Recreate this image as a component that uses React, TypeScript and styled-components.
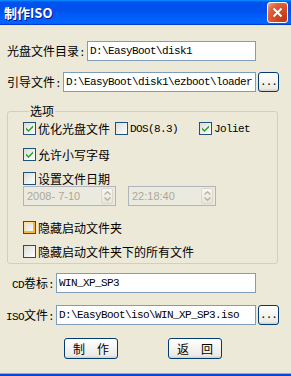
import styled, { createGlobalStyle, css } from "styled-components";

const CJK = `"Noto Sans CJK SC", "Liberation Sans", sans-serif`;
const MONO = `"Liberation Mono", "Noto Sans CJK SC", monospace`;

const GlobalStyle = createGlobalStyle`
  html, body {
    margin: 0;
    padding: 0;
    background: #ece9d8;
  }
  body {
    font-family: ${CJK};
    font-size: 12px;
    color: #000;
  }
`;

const Window = styled.div`
  width: 291px;
  height: 376px;
  display: flex;
  flex-direction: column;
  background: #ece9d8;
  overflow: hidden;
`;

const TitleBar = styled.div`
  height: 25px;
  flex: none;
  display: flex;
  align-items: center;
  justify-content: space-between;
  padding: 0 3px 0 4px;
  box-sizing: border-box;
  background: linear-gradient(
    180deg,
    #0997ff,
    #0053ee 8%,
    #0050ee 40%,
    #0066ff 88%,
    #0066ff 93%,
    #005bff 95%,
    #003dd7 96%,
    #003dd7
  );
`;

const Title = styled.span`
  color: #fff;
  font: bold 13px ${CJK};
  line-height: 1;
  text-shadow: 1px 1px #0f1089;
`;

const CloseButton = styled.button`
  width: 21px;
  height: 21px;
  padding: 0;
  display: flex;
  align-items: center;
  justify-content: center;
  border: 1px solid #fff;
  border-radius: 3px;
  background: radial-gradient(
    circle at 85% 85%,
    #c03a12 0%,
    #d8502a 50%,
    #e26440 72%,
    #f09a78 92%,
    #fcd8c8 100%
  );
`;

const Body = styled.div`
  flex: 1;
  padding-top: 16px;
`;

const FrameBottom = styled.div`
  height: 3px;
  flex: none;
  background: linear-gradient(180deg, #8fa8e8 0 1px, #0b47d6 1px);
`;

const Row = styled.div<{ $gap?: number }>`
  display: flex;
  align-items: center;
  height: 20px;
  margin-top: ${({ $gap }) => $gap ?? 0}px;
`;

const Label = styled.label<{ $width: number }>`
  width: ${({ $width }) => $width}px;
  flex: none;
  box-sizing: border-box;
  padding-right: 2px;
  text-align: right;
  white-space: nowrap;
  line-height: 20px;
`;

const Latin = styled.span`
  font: 11px ${MONO};
  letter-spacing: -0.6px;
`;

const TextBox = styled.input<{ $width: number }>`
  width: ${({ $width }) => $width}px;
  height: 20px;
  flex: none;
  box-sizing: border-box;
  margin: 0;
  padding: 0 0 0 2px;
  border: 1px solid #7f9db9;
  border-radius: 0;
  background: #fff;
  color: #000;
  font: 11px ${MONO};
  letter-spacing: -0.6px;
  outline: none;
`;

const XpButton = styled.button`
  padding: 0;
  margin: 0;
  border: 1px solid #003c74;
  border-radius: 3px;
  background: linear-gradient(180deg, #fff, #ecebe6 86%, #d6d0c5);
  color: #000;
  box-sizing: border-box;
`;

const BrowseButton = styled(XpButton)`
  width: 21px;
  height: 20px;
  margin-left: 2px;
  font: 11px ${MONO};
  letter-spacing: -1px;
  line-height: 16px;
`;

const Group = styled.fieldset`
  margin: 13px 13px 0 7px;
  padding: 5px 0 5px 15px;
  border: 1px solid #d0d0bf;
  border-radius: 3px;
  min-width: 0;
`;

const GroupTitle = styled.legend`
  margin-left: 6px;
  padding: 0 1px;
  font-size: 12px;
  line-height: 12px;
`;

const CheckRow = styled.div<{ $gap?: number }>`
  display: flex;
  align-items: center;
  height: 13px;
  margin-top: ${({ $gap }) => $gap ?? 0}px;
`;

const CheckItem = styled.label<{ $width?: number }>`
  display: flex;
  align-items: center;
  gap: 2px;
  flex: none;
  width: ${({ $width }) => ($width ? `${$width}px` : "auto")};
  white-space: nowrap;
  line-height: 13px;
`;

const Box = styled.span<{ $hot?: boolean }>`
  width: 13px;
  height: 13px;
  flex: none;
  box-sizing: border-box;
  display: inline-flex;
  align-items: center;
  justify-content: center;
  border: 1px solid #1c5180;
  background: linear-gradient(135deg, #dcdcd7, #fff);
  ${({ $hot }) =>
    $hot &&
    css`
      box-shadow: inset -2px -2px #f8b636, inset 2px 2px #fedf9c;
    `}
`;

const PickerRow = styled.div`
  display: flex;
  gap: 12px;
  margin-top: 1px;
`;

const Picker = styled.div<{ $width: number }>`
  width: ${({ $width }) => $width}px;
  height: 20px;
  box-sizing: border-box;
  display: flex;
  align-items: center;
  justify-content: space-between;
  padding: 0 2px 0 3px;
  border: 1px solid #b0b4bc;
  background: #ebeadf;
  color: #aca899;
  font: 11px "Liberation Sans", sans-serif;
  white-space: pre;
`;

const Spinner = styled.div`
  width: 12px;
  height: 16px;
  box-sizing: border-box;
  display: flex;
  flex-direction: column;
  align-items: center;
  justify-content: space-evenly;
  border: 1px solid #dcd9cc;
  border-radius: 2px;
  background: linear-gradient(180deg, #f8f7f3, #e6e4da);
`;

const ActionRow = styled.div`
  display: flex;
  gap: 50px;
  padding-left: 64px;
  margin-top: 13px;
`;

const ActionButton = styled(XpButton)`
  width: 54px;
  height: 21px;
  font: 12px ${CJK};
  line-height: 19px;
`;

const Check = () => (
  <svg width="7" height="7" viewBox="0 0 7 7">
    <polygon points="0,2.5 2.5,5 7,0.5 7,2.5 2.5,7 0,4.5" fill="#21a121" />
  </svg>
);

const CheckBox = ({
  checked,
  hot,
  width,
  children,
}: {
  checked?: boolean;
  hot?: boolean;
  width?: number;
  children: React.ReactNode;
}) => (
  <CheckItem $width={width}>
    <Box $hot={hot}>{checked && <Check />}</Box>
    {children}
  </CheckItem>
);

const Arrow = ({ up }: { up?: boolean }) => (
  <svg width="7" height="4" viewBox="0 0 7 4">
    <polyline
      points={up ? "0.5,3.5 3.5,0.8 6.5,3.5" : "0.5,0.5 3.5,3.2 6.5,0.5"}
      fill="none"
      stroke="#b6b3a6"
      strokeWidth="1.4"
    />
  </svg>
);

const DateField = ({ width, value }: { width: number; value: string }) => (
  <Picker $width={width}>
    <span>{value}</span>
    <Spinner>
      <Arrow up />
      <Arrow />
    </Spinner>
  </Picker>
);

export default function App() {
  return (
    <>
      <GlobalStyle />
      <Window>
        <TitleBar>
          <Title>制作ISO</Title>
          <CloseButton aria-label="关闭">
            <svg width="11" height="11" viewBox="0 0 11 11">
              <path d="M1.5 1.5 L9.5 9.5 M9.5 1.5 L1.5 9.5" stroke="#fff" strokeWidth="2" />
            </svg>
          </CloseButton>
        </TitleBar>

        <Body>
          <Row>
            <Label $width={87}>
              光盘文件目录<Latin>:</Latin>
            </Label>
            <TextBox $width={169} readOnly value={"D:\\EasyBoot\\disk1"} />
          </Row>
          <Row $gap={11}>
            <Label $width={63}>
              引导文件<Latin>:</Latin>
            </Label>
            <TextBox $width={193} readOnly value={"D:\\EasyBoot\\disk1\\ezboot\\loader"} />
            <BrowseButton>...</BrowseButton>
          </Row>

          <Group>
            <GroupTitle>选项</GroupTitle>
            <CheckRow>
              <CheckBox checked width={92}>
                优化光盘文件
              </CheckBox>
              <CheckBox width={84}>
                <Latin>DOS(8.3)</Latin>
              </CheckBox>
              <CheckBox checked>
                <Latin>Joliet</Latin>
              </CheckBox>
            </CheckRow>
            <CheckRow $gap={13}>
              <CheckBox checked>允许小写字母</CheckBox>
            </CheckRow>
            <CheckRow $gap={11}>
              <CheckBox>设置文件日期</CheckBox>
            </CheckRow>
            <PickerRow>
              <DateField width={93} value="2008- 7-10" />
              <DateField width={88} value="22:18:40" />
            </PickerRow>
            <CheckRow $gap={15}>
              <CheckBox hot>隐藏启动文件夹</CheckBox>
            </CheckRow>
            <CheckRow $gap={11}>
              <CheckBox>隐藏启动文件夹下的所有文件</CheckBox>
            </CheckRow>
          </Group>

          <Row $gap={9}>
            <Label $width={56}>
              <Latin>CD</Latin>卷标<Latin>:</Latin>
            </Label>
            <TextBox $width={200} readOnly value="WIN_XP_SP3" />
          </Row>
          <Row $gap={12}>
            <Label $width={56}>
              <Latin>ISO</Latin>文件<Latin>:</Latin>
            </Label>
            <TextBox $width={200} readOnly value={"D:\\EasyBoot\\iso\\WIN_XP_SP3.iso"} />
            <BrowseButton>...</BrowseButton>
          </Row>

          <ActionRow>
            <ActionButton>制　作</ActionButton>
            <ActionButton>返　回</ActionButton>
          </ActionRow>
        </Body>
        <FrameBottom />
      </Window>
    </>
  );
}
